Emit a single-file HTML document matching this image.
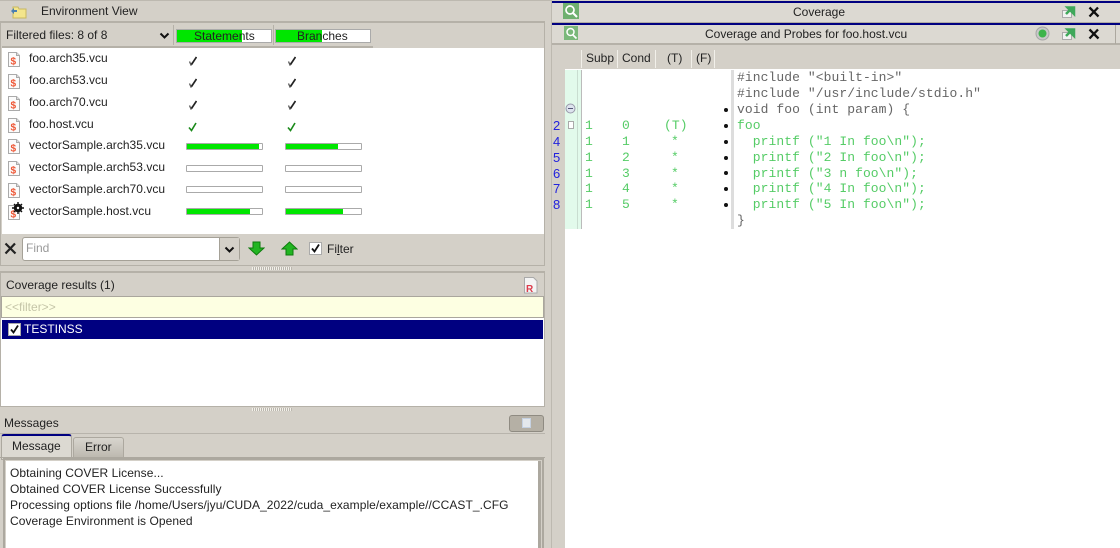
<!DOCTYPE html>
<html><head><meta charset="utf-8"><style>
html,body{margin:0;padding:0;width:1120px;height:548px;overflow:hidden;background:#d4d0c8}
body{position:relative;font-family:"Liberation Sans",sans-serif;font-size:12px;color:#222;filter:blur(.3px)}
.a{position:absolute;box-sizing:border-box}
.t{position:absolute;white-space:pre;line-height:14px}
.l{letter-spacing:.06px}
.v{letter-spacing:.03px}
.m{position:absolute;white-space:pre;font-family:"Liberation Mono",monospace;font-size:13px;letter-spacing:.07px;line-height:16px;color:#666}
.g{color:#55cc66}
.bar{position:absolute;width:77px;height:7px;background:#fff;border:1px solid #aaa;box-sizing:border-box;border-radius:1px}
.bar i{display:block;height:100%;background:#00e600}
</style></head><body>

<!-- Left top -->
<div class="a" style="left:0;top:0;width:551px;height:1px;background:#bdb9b0"></div>
<div class="t" style="left:41px;top:4px">Environment View</div>
<svg class="a" style="left:10px;top:5px" width="17" height="14"><path d="M3 2h5l1 2h7v9H3z" fill="#f3e58c" stroke="#c8b860"/><path d="M1 6l3-3v2h3v2H4v2z" fill="#4a7fb0"/></svg>

<div class="a" style="left:0;top:21px;width:545px;height:245px;border:1px solid #b5b1a8;border-top:2px solid #b5b1a8"></div>
<div class="t" style="left:6px;top:28px">Filtered files: 8 of 8</div>
<svg class="a" style="left:159px;top:32px" width="11" height="7"><path d="M1.500 1.500L5.500 5.500L9.500 1.500" fill="none" stroke="#111" stroke-width="2"/></svg>
<div class="a" style="left:173px;top:25px;width:1px;height:20px;background:#b5b1a8"></div>
<div class="a" style="left:176px;top:29px;width:96px;height:14px;background:#fff;border:1px solid #aaa"><div style="width:65px;height:12px;background:#00e600"></div></div>
<div class="t" style="left:194px;top:29px">Statements</div>
<div class="a" style="left:273px;top:25px;width:1px;height:20px;background:#b5b1a8"></div>
<div class="a" style="left:275px;top:29px;width:96px;height:14px;background:#fff;border:1px solid #aaa"><div style="width:46px;height:12px;background:#00e600"></div></div>
<div class="t" style="left:297px;top:29px">Branches</div>

<div class="a" style="left:2px;top:46px;width:371px;height:2px;background:#b5b1a8"></div>
<div class="a" style="left:2px;top:48px;width:542px;height:186px;background:#fff"></div>

<!-- File rows -->
<svg width="0" height="0" style="position:absolute"><defs><g id="f"><path d="M.5.500h8l3 3v11H.5z" fill="#fbfbfb" stroke="#aaa"/><path d="M8.500.500v3h3" fill="#ddd" stroke="#aaa"/><text x="2.500" y="12.500" font-size="10" font-weight="bold" font-family="Liberation Sans" fill="#ee5533">$</text></g></defs></svg>
<svg class="a" style="left:8px;top:52px" width="13" height="16"><use href="#f"/></svg>
<svg class="a" style="left:8px;top:74px" width="13" height="16"><use href="#f"/></svg>
<svg class="a" style="left:8px;top:96px" width="13" height="16"><use href="#f"/></svg>
<svg class="a" style="left:8px;top:118px" width="13" height="16"><use href="#f"/></svg>
<svg class="a" style="left:8px;top:139px" width="13" height="16"><use href="#f"/></svg>
<svg class="a" style="left:8px;top:161px" width="13" height="16"><use href="#f"/></svg>
<svg class="a" style="left:8px;top:183px" width="13" height="16"><use href="#f"/></svg>
<svg class="a" style="left:8px;top:205px" width="13" height="16"><use href="#f"/></svg>
<svg class="a" style="left:12px;top:202px" width="12" height="12"><circle cx="6" cy="6" r="3.200" fill="none" stroke="#111" stroke-width="2"/><path d="M6 0v12M0 6h12M2 2l8 8M10 2l-8 8" stroke="#111" stroke-width="1.400"/><circle cx="6" cy="6" r="1.200" fill="#fff"/></svg>

<div class="t" style="left:29px;top:51px">foo.arch35.vcu</div>
<div class="t" style="left:29px;top:73px">foo.arch53.vcu</div>
<div class="t" style="left:29px;top:95px">foo.arch70.vcu</div>
<div class="t" style="left:29px;top:117px">foo.host.vcu</div>
<div class="t v" style="left:29px;top:138px">vectorSample.arch35.vcu</div>
<div class="t v" style="left:29px;top:160px">vectorSample.arch53.vcu</div>
<div class="t v" style="left:29px;top:182px">vectorSample.arch70.vcu</div>
<div class="t v" style="left:29px;top:204px">vectorSample.host.vcu</div>

<svg width="0" height="0" style="position:absolute"><defs><g id="c"><path d="M1.500 5.500L3 9L4.500 6.500" fill="none" stroke-width="1.300" opacity=".75"/><path d="M3.500 8.500L8.500 1" fill="none" stroke-width="1.700"/></g></defs></svg>
<svg class="a" style="left:188px;top:56px" width="9" height="10" stroke="#222"><use href="#c"/></svg>
<svg class="a" style="left:287px;top:56px" width="9" height="10" stroke="#222"><use href="#c"/></svg>
<svg class="a" style="left:188px;top:78px" width="9" height="10" stroke="#222"><use href="#c"/></svg>
<svg class="a" style="left:287px;top:78px" width="9" height="10" stroke="#222"><use href="#c"/></svg>
<svg class="a" style="left:188px;top:100px" width="9" height="10" stroke="#222"><use href="#c"/></svg>
<svg class="a" style="left:287px;top:100px" width="9" height="10" stroke="#222"><use href="#c"/></svg>
<svg class="a" style="left:188px;top:122px" width="9" height="10"><path d="M1 5.500l2.500 3L8 1" fill="none" stroke="#1a8a1a" stroke-width="1.600"/></svg>
<svg class="a" style="left:287px;top:122px" width="9" height="10"><path d="M1 5.500l2.500 3L8 1" fill="none" stroke="#1a8a1a" stroke-width="1.600"/></svg>

<div class="bar" style="left:186px;top:143px"><i style="width:72px"></i></div>
<div class="bar" style="left:285px;top:143px"><i style="width:52px"></i></div>
<div class="bar" style="left:186px;top:165px"></div>
<div class="bar" style="left:285px;top:165px"></div>
<div class="bar" style="left:186px;top:186px"></div>
<div class="bar" style="left:285px;top:186px"></div>
<div class="bar" style="left:186px;top:208px"><i style="width:63px"></i></div>
<div class="bar" style="left:285px;top:208px"><i style="width:57px"></i></div>

<!-- Find bar -->
<svg class="a" style="left:4px;top:242px" width="13" height="13"><path d="M1.500 1.500l10 10M11 1.500l-9.500 10" stroke="#222" stroke-width="2.200"/></svg>
<div class="a" style="left:22px;top:237px;width:218px;height:24px;background:#fff;border:1px solid #a5a197;border-radius:3px"></div>
<div class="a" style="left:219px;top:238px;width:20px;height:22px;background:#d4d0c8;border-left:1px solid #a5a197"></div>
<svg class="a" style="left:224px;top:246px" width="11" height="7"><path d="M1.500 1.500L5.500 5.500L9.500 1.500" fill="none" stroke="#111" stroke-width="2"/></svg>
<div class="t" style="left:26px;top:241px;color:#999">Find</div>
<svg class="a" style="left:248px;top:241px" width="17" height="15"><path d="M5 1h7v6h4L8.500 14 1 7h4z" fill="#22b522" stroke="#0c7a0c"/></svg>
<svg class="a" style="left:281px;top:241px" width="17" height="15"><path d="M5 14h7V8h4L8.500 1 1 8h4z" fill="#22b522" stroke="#0c7a0c"/></svg>
<div class="a" style="left:309px;top:242px;width:13px;height:13px;background:#fff;border:1px solid #aaa"></div>
<svg class="a" style="left:310px;top:243px" width="11" height="11"><path d="M2 5.500l2.500 3L9 1.500" fill="none" stroke="#111" stroke-width="1.800"/></svg>
<div class="t" style="left:327px;top:242px">Fi<u>l</u>ter</div>

<!-- splitter -->
<div class="a" style="left:252px;top:267px;width:40px;height:3px;background:repeating-linear-gradient(90deg,#f2f0ea 0 1px,#bbb7ae 1px 2px)"></div>

<!-- Coverage results -->
<div class="a" style="left:0;top:271px;width:545px;height:136px;border:1px solid #b5b1a8;border-top:2px solid #b5b1a8"></div>
<div class="t" style="left:6px;top:278px">Coverage results (1)</div>
<svg class="a" style="left:524px;top:277px" width="14" height="17"><path d="M.5.500h9l3.500 3.500V16H.5z" fill="#f4f4f4" stroke="#aaa"/><text x="2" y="15" font-size="10" font-weight="bold" font-family="Liberation Sans" fill="#dc3c4c">R</text></svg>
<div class="a" style="left:1px;top:296px;width:543px;height:22px;background:#fdffe2;border:1px solid #aaa69d"></div>
<div class="t" style="left:5px;top:300px;color:#c5c5a8">&lt;&lt;filter&gt;&gt;</div>
<div class="a" style="left:1px;top:318px;width:543px;height:88px;background:#fff"></div>
<div class="a" style="left:2px;top:320px;width:541px;height:19px;background:#000080"></div>
<div class="a" style="left:8px;top:323px;width:13px;height:13px;background:#fff;border:1px solid #aaa"></div>
<svg class="a" style="left:9px;top:324px" width="11" height="11"><path d="M2 5.500l2.500 3L9 1.500" fill="none" stroke="#111" stroke-width="1.800"/></svg>
<div class="t" style="left:24px;top:322px;color:#fff">TESTINSS</div>

<div class="a" style="left:252px;top:408px;width:40px;height:3px;background:repeating-linear-gradient(90deg,#f2f0ea 0 1px,#bbb7ae 1px 2px)"></div>

<!-- Messages -->
<div class="t" style="left:4px;top:416px">Messages</div>
<div class="a" style="left:0;top:433px;width:545px;height:1px;background:#b8b4ac"></div>
<div class="a" style="left:509px;top:415px;width:35px;height:17px;background:#b5b0a5;border:1px solid #8f8b82;border-radius:3px"></div>
<div class="a" style="left:522px;top:418px;width:9px;height:10px;background:#e4e8ec;border:1px solid #c6d2e2"></div>

<div class="a" style="left:1px;top:434px;width:71px;height:26px;background:#dcd9d2;border:1px solid #aca89f;border-top:2px solid #000080;border-radius:3px 3px 0 0"></div>
<div class="t" style="left:12px;top:439px">Message</div>
<div class="a" style="left:73px;top:437px;width:51px;height:20px;background:linear-gradient(#d8d5ce,#bdb9b0);border:1px solid #aca89f;border-bottom:0;border-radius:3px 3px 0 0"></div>
<div class="t" style="left:85px;top:440px">Error</div>
<div class="a" style="left:0;top:457px;width:545px;height:1px;background:#aca89f"></div>
<div class="a" style="left:3px;top:458px;width:541px;height:90px;border:2px solid #aca89f;border-bottom:0"></div>
<div class="a" style="left:6px;top:461px;width:535px;height:87px;background:#fff;border-right:3px solid #aca89f"></div>
<div class="t l" style="left:10px;top:466px">Obtaining COVER License...</div>
<div class="t l" style="left:10px;top:482px">Obtained COVER License Successfully</div>
<div class="t l" style="left:10px;top:498px">Processing options file /home/Users/jyu/CUDA_2022/cuda_example/example//CCAST_.CFG</div>
<div class="t l" style="left:10px;top:514px">Coverage Environment is Opened</div>

<div class="a" style="left:551px;top:0;width:1px;height:548px;background:#bdb9b0"></div>

<!-- Right panel -->
<div class="a" style="left:552px;top:1px;width:568px;height:2px;background:#000080"></div>
<div class="a" style="left:552px;top:3px;width:568px;height:20px;background:#dcd9d2;border-bottom:1px solid #b0aca3"></div>
<div class="a" style="left:552px;top:23px;width:568px;height:2px;background:#000080"></div>
<div class="a" style="left:552px;top:25px;width:568px;height:20px;background:#dcd9d2;border-bottom:2px solid #b5b1a8"></div>
<div class="a" style="left:1115px;top:25px;width:1px;height:19px;background:#aca89f"></div>

<svg class="a" style="left:563px;top:3px" width="16" height="16"><rect width="16" height="16" fill="#6fb06f"/><circle cx="7" cy="7" r="4" fill="none" stroke="#fff" stroke-width="1.700"/><path d="M10 10l4 4" stroke="#fff" stroke-width="2"/></svg>
<svg class="a" style="left:564px;top:26px" width="14" height="14"><rect width="14" height="14" fill="#7ab87a"/><circle cx="6.500" cy="6" r="3.500" fill="none" stroke="#fff" stroke-width="1.500"/><path d="M9 9l3.500 3.500" stroke="#fff" stroke-width="1.700"/></svg>
<div class="t" style="left:793px;top:5px">Coverage</div>
<div class="t" style="left:705px;top:27px">Coverage and Probes for foo.host.vcu</div>

<svg width="0" height="0" style="position:absolute"><defs><g id="u"><rect x=".5" y="5.500" width="9" height="7" fill="#f2f2f2" stroke="#aaa"/><path d="M4 9l5-5M5.500 2.500H12V9z" stroke="#3fa85a" stroke-width="2.500" fill="#3fa85a"/></g><path id="x" d="M1.500 1.500l9 9M10 1.500l-8.500 9" stroke="#111" stroke-width="2.300"/></defs></svg>
<svg class="a" style="left:1062px;top:5px" width="14" height="14"><use href="#u"/></svg>
<svg class="a" style="left:1062px;top:27px" width="14" height="14"><use href="#u"/></svg>
<svg class="a" style="left:1088px;top:6px" width="12" height="12"><use href="#x"/></svg>
<svg class="a" style="left:1088px;top:28px" width="12" height="12"><use href="#x"/></svg>
<svg class="a" style="left:1035px;top:26px" width="15" height="15"><circle cx="7.500" cy="7.500" r="6.500" fill="#c8c8c8" stroke="#a5a5a5"/><circle cx="7.500" cy="7.500" r="4" fill="#3cb44a"/></svg>

<!-- column heads -->
<div class="a" style="left:581px;top:50px;width:1px;height:18px;background:#f2f0ea"></div>
<div class="a" style="left:617px;top:50px;width:1px;height:18px;background:#f2f0ea"></div>
<div class="a" style="left:655px;top:50px;width:1px;height:18px;background:#f2f0ea"></div>
<div class="a" style="left:691px;top:50px;width:1px;height:18px;background:#f2f0ea"></div>
<div class="a" style="left:714px;top:50px;width:1px;height:18px;background:#f2f0ea"></div>
<div class="t" style="left:586px;top:51px">Subp</div>
<div class="t" style="left:622px;top:51px">Cond</div>
<div class="t" style="left:667px;top:51px">(T)</div>
<div class="t" style="left:696px;top:51px">(F)</div>

<!-- code area -->
<div class="a" style="left:565px;top:69px;width:555px;height:479px;background:#fff"></div>
<div class="a" style="left:552px;top:69px;width:13px;height:479px;background:#d4d0c8"></div>
<div class="a" style="left:565px;top:70px;width:16px;height:159px;background:#e2faeb"></div>
<div class="a" style="left:577px;top:70px;width:4px;height:159px;background:#e2faeb;border-left:1px solid #c9ddd0"></div>
<div class="a" style="left:581px;top:70px;width:1px;height:159px;background:#bbb"></div>
<div class="a" style="left:731px;top:70px;width:3px;height:159px;background:#ddd"></div>

<svg class="a" style="left:565px;top:103px" width="12" height="12"><circle cx="5.500" cy="5.500" r="4.500" fill="#dde4ee" stroke="#99a"/><path d="M3 5.500h5" stroke="#557"/></svg>
<div class="a" style="left:568px;top:121px;width:6px;height:8px;background:#fff;border:1px solid #aaa"></div>
<div class="t" style="left:553px;top:119px;color:#2222dd;font-size:13px">2</div>
<div class="t" style="left:553px;top:135px;color:#2222dd;font-size:13px">4</div>
<div class="t" style="left:553px;top:151px;color:#2222dd;font-size:13px">5</div>
<div class="t" style="left:553px;top:167px;color:#2222dd;font-size:13px">6</div>
<div class="t" style="left:553px;top:182px;color:#2222dd;font-size:13px">7</div>
<div class="t" style="left:553px;top:198px;color:#2222dd;font-size:13px">8</div>

<div class="m g" style="left:585px;top:118px">1</div><div class="m g" style="left:622px;top:118px">0</div><div class="m g" style="left:664px;top:118px">(T)</div>
<div class="m g" style="left:585px;top:134px">1</div><div class="m g" style="left:622px;top:134px">1</div><div class="m g" style="left:671px;top:134px">*</div>
<div class="m g" style="left:585px;top:150px">1</div><div class="m g" style="left:622px;top:150px">2</div><div class="m g" style="left:671px;top:150px">*</div>
<div class="m g" style="left:585px;top:166px">1</div><div class="m g" style="left:622px;top:166px">3</div><div class="m g" style="left:671px;top:166px">*</div>
<div class="m g" style="left:585px;top:181px">1</div><div class="m g" style="left:622px;top:181px">4</div><div class="m g" style="left:671px;top:181px">*</div>
<div class="m g" style="left:585px;top:197px">1</div><div class="m g" style="left:622px;top:197px">5</div><div class="m g" style="left:671px;top:197px">*</div>

<div class="a" style="left:724px;top:108px;width:4px;height:4px;background:#111;border-radius:50%"></div>
<div class="a" style="left:724px;top:124px;width:4px;height:4px;background:#111;border-radius:50%"></div>
<div class="a" style="left:724px;top:140px;width:4px;height:4px;background:#111;border-radius:50%"></div>
<div class="a" style="left:724px;top:156px;width:4px;height:4px;background:#111;border-radius:50%"></div>
<div class="a" style="left:724px;top:171px;width:4px;height:4px;background:#111;border-radius:50%"></div>
<div class="a" style="left:724px;top:187px;width:4px;height:4px;background:#111;border-radius:50%"></div>
<div class="a" style="left:724px;top:203px;width:4px;height:4px;background:#111;border-radius:50%"></div>

<div class="m" style="left:737px;top:70px">#include "&lt;built-in&gt;"</div>
<div class="m" style="left:737px;top:86px">#include "/usr/include/stdio.h"</div>
<div class="m" style="left:737px;top:102px">void foo (int param) {</div>
<div class="m g" style="left:737px;top:118px">foo</div>
<div class="m g" style="left:737px;top:134px">  printf ("1 In foo\n");</div>
<div class="m g" style="left:737px;top:150px">  printf ("2 In foo\n");</div>
<div class="m g" style="left:737px;top:166px">  printf ("3 n foo\n");</div>
<div class="m g" style="left:737px;top:181px">  printf ("4 In foo\n");</div>
<div class="m g" style="left:737px;top:197px">  printf ("5 In foo\n");</div>
<div class="m" style="left:737px;top:213px">}</div>
</body></html>
